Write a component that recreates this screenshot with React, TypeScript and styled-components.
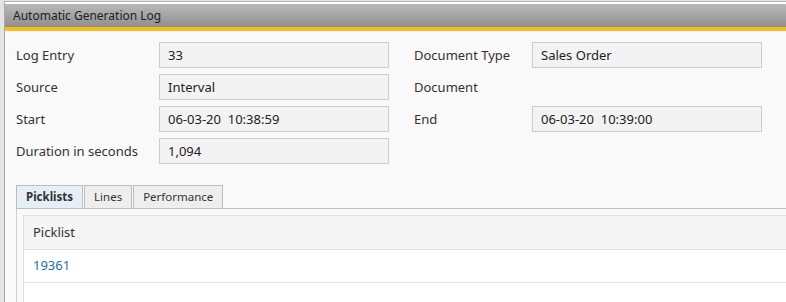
import styled, { createGlobalStyle } from 'styled-components';

const GlobalStyle = createGlobalStyle`
  html, body {
    margin: 0;
    padding: 0;
    background: #e4e4e4;
    font-family: 'Noto Sans', 'Open Sans', sans-serif;
    overflow: hidden;
  }
`;

type FieldProps = { label: string; value?: string; labelWidth: number };

const Field = ({ label, value, labelWidth }: FieldProps) => (
  <FieldRow>
    <FieldLabel $width={labelWidth}>{label}</FieldLabel>
    {value !== undefined && <ValueBox>{value}</ValueBox>}
  </FieldRow>
);

const App = () => {
  return (
    <>
      <GlobalStyle />
      <Frame>
        <TitleBar>Automatic Generation Log</TitleBar>
        <Body>
          <FormGrid>
            <Column>
              <Field labelWidth={143} label="Log Entry" value="33" />
              <Field labelWidth={143} label="Source" value="Interval" />
              <Field labelWidth={143} label="Start" value="06-03-20  10:38:59" />
              <Field labelWidth={143} label="Duration in seconds" value="1,094" />
            </Column>
            <Column>
              <Field labelWidth={118} label="Document Type" value="Sales Order" />
              <Field labelWidth={118} label="Document" />
              <Field labelWidth={118} label="End" value="06-03-20  10:39:00" />
            </Column>
          </FormGrid>

          <TabStrip>
            <Tab $active>Picklists</Tab>
            <Tab>Lines</Tab>
            <Tab>Performance</Tab>
          </TabStrip>
          <TabPanel>
            <Table>
              <HeaderCell>Picklist</HeaderCell>
              <RowCell>
                <LinkText>19361</LinkText>
              </RowCell>
              <EmptyCell />
            </Table>
          </TabPanel>
        </Body>
      </Frame>
    </>
  );
};

export default App;

const Frame = styled.div`
  margin-left: 4px;
  margin-top: 1px;
  border-top: 1px solid #b4b4b4;
  border-left: 1px solid #a8a8a8;
  padding-top: 2px;
  background: #ffffff;
  height: 300px;
  display: flex;
  flex-direction: column;
`;

const TitleBar = styled.div`
  height: 23px;
  line-height: 24px;
  padding-left: 8px;
  font-size: 12px;
  color: #1e1e1e;
  background: linear-gradient(#b9b9b9, #8f8f8f);
  border-bottom: 4px solid #f9bd17;
`;

const Body = styled.div`
  flex: 1;
  background: #f9f9f9;
  padding: 11px 0 0 11px;
`;

const FormGrid = styled.div`
  display: flex;
  gap: 25px;
`;

const Column = styled.div`
  display: flex;
  flex-direction: column;
  gap: 6px;
`;

const FieldRow = styled.div`
  display: flex;
  align-items: center;
  height: 26px;
`;

const FieldLabel = styled.div<{ $width: number }>`
  width: ${(p) => p.$width}px;
  font-size: 13px;
  color: #333;
`;

const ValueBox = styled.div`
  box-sizing: border-box;
  width: 230px;
  height: 26px;
  padding-left: 8px;
  line-height: 24px;
  font-size: 13px;
  color: #222;
  white-space: pre;
  background: #f3f3f3;
  border: 1px solid #cccccc;
`;

const TabStrip = styled.div`
  display: flex;
  margin-top: 21px;
  gap: 1px;
`;

const Tab = styled.div<{ $active?: boolean }>`
  box-sizing: border-box;
  height: 23px;
  padding: 0 9px;
  line-height: 21px;
  font-size: 11.5px;
  font-weight: ${(p) => (p.$active ? 700 : 400)};
  color: #333;
  background: ${(p) => (p.$active ? '#e6eef6' : '#eeeeee')};
  border: 1px solid #bdbdbd;
  border-bottom: none;
`;

const TabPanel = styled.div`
  border-top: 1px solid #bcbcbc;
  border-left: 1px solid #cfcfcf;
  padding: 6px 0 0 6px;
  height: 100px;
`;

const Table = styled.div`
  border-top: 1px solid #e2e2e2;
  border-left: 1px solid #e2e2e2;
  background: #ffffff;
  height: 100%;
`;

const HeaderCell = styled.div`
  height: 33px;
  line-height: 32px;
  padding-left: 9px;
  font-size: 13px;
  color: #333;
  background: #f5f5f5;
  border-bottom: 1px solid #dedede;
`;

const RowCell = styled.div`
  height: 32px;
  line-height: 31px;
  padding-left: 9px;
  font-size: 13px;
  border-bottom: 1px solid #e2e2e2;
`;

const LinkText = styled.span`
  color: #1b72b5;
`;

const EmptyCell = styled.div`
  height: 20px;
`;
